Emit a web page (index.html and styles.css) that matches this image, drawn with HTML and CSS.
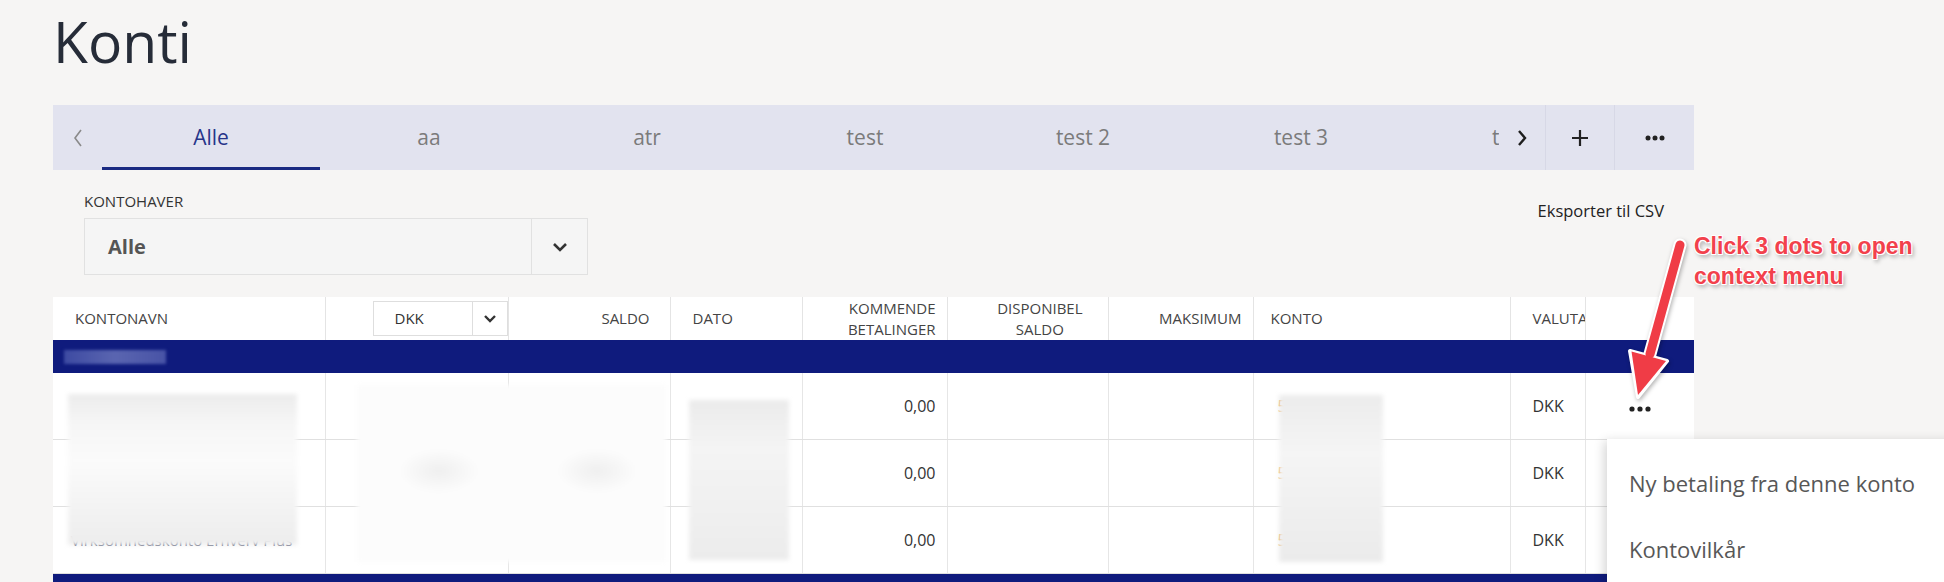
FILE: index.html
```html
<!DOCTYPE html>
<html lang="da">
<head>
    <meta charset="UTF-8">
    <meta name="viewport" content="width=device-width, initial-scale=1.0">
    <title>Konti</title>
    <link rel="stylesheet" href="styles.css">
</head>
<body>
    <div class="page">
        <h1>Konti</h1>

        <!-- Tabs -->
        <div class="tabbar">
            <button class="tab-nav prev">
                <svg width="12" height="20" viewBox="0 0 12 20"><path d="M9 2 L3 10 L9 18" fill="none" stroke="#8a8a8a" stroke-width="1.6"/></svg>
            </button>
            <div class="tabs">
                <div class="tab active">Alle</div>
                <div class="tab">aa</div>
                <div class="tab">atr</div>
                <div class="tab">test</div>
                <div class="tab">test 2</div>
                <div class="tab">test 3</div>
                <div class="tab">test 4</div>
            </div>
            <button class="tab-nav next">
                <svg width="12" height="18" viewBox="0 0 12 18"><path d="M3 2 L9 9 L3 16" fill="none" stroke="#1e1e1e" stroke-width="2.4"/></svg>
            </button>
            <button class="tab-btn">
                <svg width="18" height="18" viewBox="0 0 18 18"><path d="M9 1 V17 M1 9 H17" stroke="#222" stroke-width="2.2"/></svg>
            </button>
            <button class="tab-btn more">
                <svg width="20" height="6" viewBox="0 0 20 6"><circle cx="3" cy="3" r="2.5" fill="#222"/><circle cx="10" cy="3" r="2.5" fill="#222"/><circle cx="17" cy="3" r="2.5" fill="#222"/></svg>
            </button>
        </div>

        <!-- Filter -->
        <div class="toolbar">
            <div class="filter">
                <div class="filter-label">KONTOHAVER</div>
                <div class="select">
                    <span class="select-value">Alle</span>
                    <span class="select-arrow">
                        <svg width="16" height="10" viewBox="0 0 16 10"><path d="M2 2 L8 8 L14 2" fill="none" stroke="#333" stroke-width="2.6"/></svg>
                    </span>
                </div>
            </div>
            <a href="#" class="export">Eksporter til CSV</a>
        </div>

        <!-- Accounts table -->
        <div class="table-wrap">
            <table class="accounts">
                <colgroup>
                    <col style="width:272px"><col style="width:183px"><col style="width:162px"><col style="width:132px"><col style="width:145px">
                    <col style="width:161px"><col style="width:145px"><col style="width:257px"><col style="width:75px"><col style="width:109px">
                </colgroup>
                <tr class="head">
                    <th>KONTONAVN</th>
                    <th class="cur">
                        <div class="cur-select">
                            <span class="cur-value">DKK</span>
                            <span class="cur-arrow">
                                <svg width="14" height="9" viewBox="0 0 14 9"><path d="M2 2 L7 7 L12 2" fill="none" stroke="#333" stroke-width="2.4"/></svg>
                            </span>
                        </div>
                    </th>
                    <th class="num">SALDO</th>
                    <th>DATO</th>
                    <th class="num tight">KOMMENDE<br>BETALINGER</th>
                    <th class="num mid"><span>DISPONIBEL<br>SALDO</span></th>
                    <th class="num tight">MAKSIMUM</th>
                    <th class="konto">KONTO</th>
                    <th>VALUTA</th>
                    <th></th>
                </tr>
                <tr class="group">
                    <td colspan="10"><div class="group-name"></div></td>
                </tr>
                <tr class="row">
                    <td></td><td></td><td></td><td></td>
                    <td class="num tight">0,00</td>
                    <td></td><td></td>
                    <td class="konto"><span class="acct">5</span></td>
                    <td>DKK</td>
                    <td class="act">
                        <svg width="22" height="6" viewBox="0 0 22 6"><circle cx="3" cy="3" r="2.6" fill="#222"/><circle cx="11" cy="3" r="2.6" fill="#222"/><circle cx="19" cy="3" r="2.6" fill="#222"/></svg>
                    </td>
                </tr>
                <tr class="row">
                    <td></td><td></td><td></td><td></td>
                    <td class="num tight">0,00</td>
                    <td></td><td></td>
                    <td class="konto"><span class="acct">5</span></td>
                    <td>DKK</td>
                    <td class="act"></td>
                </tr>
                <tr class="row">
                    <td class="name">Virksomhedskonto Erhverv Plus</td>
                    <td></td><td></td><td></td>
                    <td class="num tight">0,00</td>
                    <td></td><td></td>
                    <td class="konto"><span class="acct">5</span></td>
                    <td>DKK</td>
                    <td class="act"></td>
                </tr>
                <tr class="group">
                    <td colspan="10"></td>
                </tr>
            </table>

            <!-- redacted areas of the screenshot -->
            <div class="redact r-name"></div>
            <div class="redact r-amount"></div>
            <div class="redact r-date"></div>
            <div class="redact r-konto"></div>

            <!-- context menu -->
            <div class="menu">
                <div class="menu-item">Ny betaling fra denne konto</div>
                <div class="menu-item">Kontovilkår</div>
            </div>
        </div>

        <!-- annotation -->
        <div class="callout">Click 3 dots to open<br>context menu</div>
        <svg class="arrow" width="80" height="175" viewBox="0 0 80 175">
            <line x1="60" y1="13" x2="30" y2="122" stroke="#fff" stroke-width="13" stroke-linecap="round"/>
            <polygon points="18,165 47,129 10,119" fill="#fff" stroke="#fff" stroke-width="4" stroke-linejoin="round"/>
            <line x1="60" y1="13" x2="30" y2="122" stroke="#f03c46" stroke-width="9" stroke-linecap="round"/>
            <polygon points="18,163 46,129 11.5,119.5" fill="#f03c46"/>
        </svg>
    </div>
</body>
</html>
```

FILE: styles.css
```css
html, body {
    overflow: hidden;
}

body {
    margin: 0;
    background-color: #f6f5f4;
    font-family: "Open Sans", "Liberation Sans", sans-serif;
    color: #333;
}

.page {
    position: relative;
    width: 1641px;
    padding-left: 53px;
}

h1 {
    margin: 2px 0 25px;
    font-size: 57px;
    font-weight: 400;
    line-height: 78px;
    color: #262c38;
}

/* Tabs */
.tabbar {
    display: flex;
    height: 65px;
    background-color: #e2e3ef;
}

.tabbar button {
    display: flex;
    align-items: center;
    justify-content: center;
    padding: 0;
    border: none;
    background: transparent;
    cursor: pointer;
}

.tab-nav.prev {
    width: 49px;
}

.tab-nav.next {
    width: 46px;
}

.tab-btn {
    width: 69px;
    border-left: 1px solid #d7d8e6 !important;
}

.tab-btn.more {
    width: 80px;
}

.tabs {
    flex: 1;
    display: flex;
    overflow: hidden;
}

.tab {
    flex: 0 0 218px;
    text-align: center;
    line-height: 65px;
    font-size: 21px;
    color: #7b7b7b;
    white-space: nowrap;
}

.tab.active {
    color: #27358a;
    box-shadow: inset 0 -3px 0 #1a2a82;
}

/* Filter */
.toolbar {
    display: flex;
    justify-content: space-between;
    align-items: flex-start;
    padding: 21px 30px 22px 31px;
}

.filter-label {
    font-size: 15px;
    line-height: 20px;
    color: #333;
    margin-bottom: 7px;
}

.select {
    display: flex;
    width: 502px;
    height: 55px;
    border: 1px solid #e1e1e1;
    background-color: #f5f5f5;
}

.select-value {
    flex: 1;
    padding-left: 23px;
    font-size: 20px;
    font-weight: 700;
    line-height: 55px;
    color: #555;
}

.select-arrow {
    width: 55px;
    display: flex;
    align-items: center;
    justify-content: center;
    border-left: 1px solid #e1e1e1;
}

.export {
    margin-top: 10px;
    font-size: 16.5px;
    line-height: 20px;
    color: #222;
    text-decoration: none;
}

/* Table */
.table-wrap {
    position: relative;
}

.accounts {
    width: 1641px;
    border-collapse: collapse;
    table-layout: fixed;
    background-color: #fff;
}

.accounts th {
    height: 43px;
    padding: 0 22px;
    font-size: 15px;
    font-weight: 400;
    line-height: 21px;
    color: #444;
    text-align: left;
    white-space: nowrap;
    overflow: hidden;
    border-right: 1px solid #e4e4e4;
}

.accounts th:last-child,
.accounts td:last-child {
    border-right: none;
}

.accounts .num {
    text-align: right;
    padding-right: 20px;
}

.accounts .num.tight {
    padding-right: 11px;
}

.accounts .num.mid {
    padding-right: 25px;
}

.accounts .num.mid span {
    display: inline-block;
    text-align: center;
}

.accounts .konto {
    padding-left: 17px;
}

.accounts th.cur {
    padding-right: 0;
    text-align: right;
}

.cur-select {
    display: inline-flex;
    width: 133px;
    height: 33px;
    border: 1px solid #dedede;
    vertical-align: middle;
}

.cur-value {
    flex: 1;
    padding-left: 21px;
    text-align: left;
    line-height: 33px;
    color: #333;
}

.cur-arrow {
    width: 34px;
    display: flex;
    align-items: center;
    justify-content: center;
    border-left: 1px solid #dedede;
}

.group td {
    height: 33px;
    padding: 0 11px;
    background-color: #0f1b7d;
}

.group-name {
    width: 102px;
    height: 14px;
    background: linear-gradient(90deg, #3d4aa2, #5a65b0 50%, #4853a6);
    filter: blur(1.5px);
}

.row td {
    height: 66px;
    padding: 0 22px;
    font-size: 16px;
    color: #333;
    white-space: nowrap;
    overflow: hidden;
    border-right: 1px solid #e6e6e6;
    border-bottom: 1px solid #e0e0e0;
}

.row td.num.tight {
    padding-right: 11px;
}

.row td.konto {
    padding-left: 24px;
}

.row td.act {
    text-align: center;
    padding: 0;
}

.row .name {
    padding-left: 18px;
    font-size: 15px;
    color: #5a5f78;
}

.acct {
    color: #e59a3a;
}

/* redactions */
.redact {
    position: absolute;
    filter: blur(2px);
}

.r-name {
    left: 15px;
    top: 97px;
    width: 229px;
    height: 151px;
    background: linear-gradient(180deg, #ececec 0%, #f6f6f6 20%, #fbfbfb 45%, #f3f3f3 75%, #ededed 100%);
}

.r-amount {
    left: 304px;
    top: 88px;
    width: 309px;
    height: 177px;
    background:
        radial-gradient(ellipse 40px 22px at 82px 86px, #efefef, transparent),
        radial-gradient(ellipse 40px 22px at 240px 86px, #efefef, transparent),
        #fcfcfc;
}

.r-date {
    left: 636px;
    top: 103px;
    width: 100px;
    height: 160px;
    background: linear-gradient(180deg, #ebebeb 0%, #f4f4f4 30%, #f1f1f1 60%, #ececec 100%);
}

.r-konto {
    left: 1226px;
    top: 98px;
    width: 104px;
    height: 167px;
    background: linear-gradient(180deg, #ececec 0%, #f5f5f5 35%, #f0f0f0 65%, #ebebeb 100%);
}

/* context menu */
.menu {
    position: absolute;
    left: 1554px;
    top: 142px;
    width: 400px;
    height: 200px;
    padding-top: 11px;
    background-color: #fff;
    box-shadow: -3px 2px 10px rgba(0, 0, 0, 0.16);
}

.menu-item {
    padding: 0 22px;
    font-size: 22px;
    line-height: 66px;
    color: #575757;
    white-space: nowrap;
}

/* annotation */
.callout {
    position: absolute;
    left: 1694px;
    top: 229px;
    font-family: "Liberation Sans", Arial, sans-serif;
    font-size: 23px;
    font-weight: 700;
    line-height: 30px;
    color: #f2414c;
    white-space: nowrap;
    text-shadow: 1px 1px 0 #fff, -1px -1px 0 #fff, 1px -1px 0 #fff, -1px 1px 0 #fff, 2px 3px 4px rgba(0, 0, 0, 0.35);
}

.arrow {
    position: absolute;
    left: 1620px;
    top: 230px;
    filter: drop-shadow(1px 2px 2px rgba(0, 0, 0, 0.3));
}
```
